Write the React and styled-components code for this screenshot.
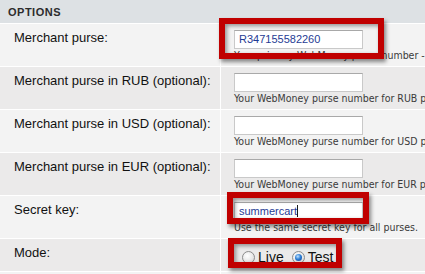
import React from 'react'
import styled, { createGlobalStyle } from 'styled-components'

const Global = createGlobalStyle`
  body {
    margin: 0;
    background: #fff;
    font-family: "Liberation Sans", Arial, sans-serif;
  }
`

const Page = styled.div`
  position: relative;
  width: 425px;
  height: 274px;
  overflow: hidden;
`

const Header = styled.div`
  height: 23px;
  background: #dde1e4;
  border-bottom: 1px solid #fff;
  padding-left: 8px;
  display: flex;
  align-items: center;
  font-size: 11px;
  font-weight: bold;
  letter-spacing: 0.5px;
  color: #2c2c2c;
`

const Row = styled.div`
  display: grid;
  grid-template-columns: 221px 1fr;
  background: ${p => (p.$dark ? '#ebeaea' : '#f3f3f3')};
  border-bottom: 1px solid #fff;
`

const Label = styled.div`
  border-right: 1px solid #fff;
  padding: 6px 0 0 14px;
  font-size: 13px;
  line-height: 15px;
  color: #111;
  white-space: nowrap;
`

const Value = styled.div`
  padding: ${p => (p.$radio ? '10px 0 6px 21px' : '5px 0 4px 13px')};
  min-height: ${p => (p.$empty ? '30px' : 'auto')};
  white-space: nowrap;
  overflow: hidden;
`

const FieldWrap = styled.div`
  position: relative;
  width: 129px;
  height: 19px;
`

const Field = styled.input`
  box-sizing: border-box;
  width: 129px;
  height: 19px;
  margin: 0;
  padding: 0 4px;
  border: 1px solid #c9c9c9;
  border-top-color: #a9a9a9;
  background: #fff;
  font-family: "Liberation Sans", Arial, sans-serif;
  font-size: 11px;
  color: #1f3c94;
  outline: none;
`

const Caret = styled.span`
  position: absolute;
  left: ${p => p.$left}px;
  top: 4px;
  width: 1px;
  height: 12px;
  background: #1a1a1a;
`

const Hint = styled.div`
  font-family: "DejaVu Sans Condensed", "DejaVu Sans", sans-serif;
  font-size: 10.5px;
  line-height: 14px;
  color: #3a3a3a;
`

const Radios = styled.div`
  display: flex;
  align-items: center;
  gap: 8px;
`

const RadioItem = styled.label`
  display: flex;
  align-items: center;
  gap: 3px;
  font-size: 14px;
  color: #111;
`

const RadioDot = styled.span`
  box-sizing: border-box;
  width: 13px;
  height: 13px;
  border-radius: 50%;
  border: 1px solid #8c8c8c;
  background: radial-gradient(circle at 40% 35%, #fff 0%, #e6e6e6 60%, #c9c9c9 100%);
  display: flex;
  align-items: center;
  justify-content: center;
  &::after {
    content: '';
    display: ${p => (p.$checked ? 'block' : 'none')};
    width: 7px;
    height: 7px;
    border-radius: 50%;
    background: radial-gradient(circle at 40% 35%, #bfe3ff 0%, #2f7fd6 45%, #0c3f8c 100%);
  }
`

const Highlight = styled.div`
  position: absolute;
  left: ${p => p.$x}px;
  top: ${p => p.$y}px;
  width: ${p => p.$w}px;
  height: ${p => p.$h}px;
  box-sizing: border-box;
  border: 6px solid #c00000;
  box-shadow: 2px 3px 4px rgba(0, 0, 0, 0.45), inset 2px 2px 4px rgba(0, 0, 0, 0.4);
  pointer-events: none;
`

const purses = [
  { label: 'Merchant purse in RUB (optional):', hint: 'Your WebMoney purse number for RUB payments.' },
  { label: 'Merchant purse in USD (optional):', hint: 'Your WebMoney purse number for USD payments.' },
  { label: 'Merchant purse in EUR (optional):', hint: 'Your WebMoney purse number for EUR payments.' },
]

export default function App() {
  return (
    <Page>
      <Global />
      <Header>OPTIONS</Header>

      <Row>
        <Label>Merchant purse:</Label>
        <Value>
          <FieldWrap>
            <Field readOnly value="R347155582260" />
          </FieldWrap>
          <Hint>Your primary WebMoney purse number - required.</Hint>
        </Value>
      </Row>

      {purses.map((p, i) => (
        <Row key={p.label} $dark={i % 2 === 0}>
          <Label>{p.label}</Label>
          <Value>
            <FieldWrap>
              <Field readOnly value="" />
            </FieldWrap>
            <Hint>{p.hint}</Hint>
          </Value>
        </Row>
      ))}

      <Row>
        <Label>Secret key:</Label>
        <Value>
          <FieldWrap>
            <Field readOnly value="summercart" />
            <Caret $left={63} />
          </FieldWrap>
          <Hint>Use the same secret key for all purses.</Hint>
        </Value>
      </Row>

      <Row $dark>
        <Label>Mode:</Label>
        <Value $radio>
          <Radios>
            <RadioItem><RadioDot />Live</RadioItem>
            <RadioItem><RadioDot $checked />Test</RadioItem>
          </Radios>
        </Value>
      </Row>

      <Row>
        <Label />
        <Value $empty />
      </Row>

      <Highlight $x={219} $y={18} $w={165} $h={41} />
      <Highlight $x={227} $y={192} $w={142} $h={32} />
      <Highlight $x={228} $y={238} $w={114} $h={30} />
    </Page>
  )
}
